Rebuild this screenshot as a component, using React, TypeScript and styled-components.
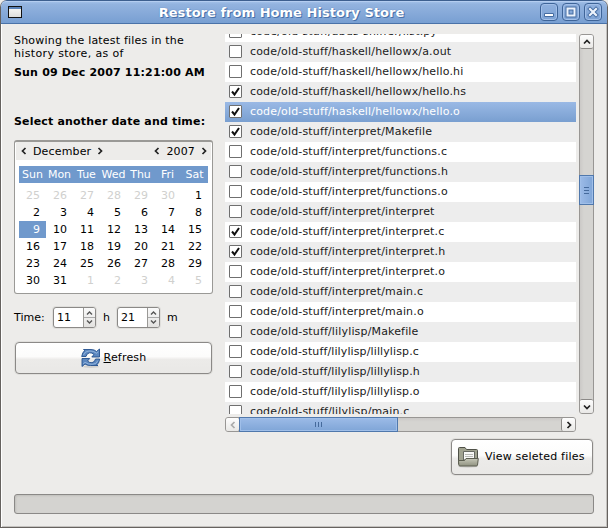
import React from "react";
import styled, { createGlobalStyle, css } from "styled-components";

const Global = createGlobalStyle`
  *, *::before, *::after { box-sizing: border-box; }
  body { margin: 0; background: #edecea; overflow: hidden; }
`;

const Window = styled.div`
  width: 608px;
  height: 528px;
  display: flex;
  flex-direction: column;
  font: 11px/13px "DejaVu Sans", sans-serif;
  color: #000;
  background: #edecea;
  border: 1px solid #66625f;
  border-top: 0;
  box-shadow: inset 1px 0 #fff, inset -1px -1px #c4c2bf;
  border-radius: 7px 7px 0 0;
  overflow: hidden;
`;

const TitleBar = styled.header`
  flex: none;
  height: 24px;
  margin: 0 -1px;
  padding: 0 5px 0 8px;
  display: flex;
  align-items: center;
  border: 1px solid #3d5f8f;
  border-bottom-color: #4a72a8;
  border-radius: 6px 6px 0 0;
  background: linear-gradient(#a4c2ea, #93b3df 15%, #789fd2);
  box-shadow: inset 0 1px #b4cdf0;
`;

const WindowIcon = styled.div`
  width: 14px;
  height: 12px;
  margin-left: -1px;
  border: 1px solid #111;
  background: linear-gradient(#5a82b8 2px, #f4f4f2 2px, #dededc);
`;

const Title = styled.h1`
  flex: 1;
  margin: 0;
  padding: 2px 0 0 1px;
  text-align: center;
  font-size: 13px;
  line-height: 20px;
  letter-spacing: 0.03px;
  color: #fff;
  text-shadow: 1px 1px #4870a8, 0 0 1px #4870a8;
`;

const TitleButtons = styled.div`
  display: flex;
  gap: 4px;
`;

const TitleButton = styled.div`
  width: 18px;
  height: 18px;
  border: 1px solid #3e6498;
  border-radius: 4px;
  box-shadow: inset 0 0 0 1px #a2bfe8;
  background: linear-gradient(#8fb0de, #7da2d4);
  svg { display: block; margin: -1px; }
`;

const Body = styled.main`
  flex: 1;
  padding: 10px 13px 13px 13px;
  display: flex;
  flex-direction: column;
`;

const Columns = styled.div`
  display: flex;
  height: 398px;
`;

const Side = styled.section`
  width: 211px;
  flex: none;
`;

const Intro = styled.p`
  margin: 0;
  height: 32px;
`;

const IntroLine = styled.span<{ $spacing: number }>`
  display: block;
  white-space: nowrap;
  letter-spacing: ${(p) => p.$spacing}px;
`;

const Strong = styled.div<{ $gap: number }>`
  font-weight: bold;
  height: 13px;
  white-space: nowrap;
  margin-bottom: ${(p) => p.$gap}px;
  letter-spacing: 0.18px;
`;

const Calendar = styled.div`
  width: 199px;
  height: 154px;
  border: 1px solid #9a9996;
  border-top: 2px solid #9a9996;
  border-radius: 3px;
  background: #fff;
  overflow: hidden;
`;

const CalendarHead = styled.div`
  height: 18px;
  margin: 0 1px;
  padding: 0 3px 0 4px;
  display: flex;
  align-items: center;
  justify-content: space-between;
  background: #edecea;
`;

const Stepper = styled.div`
  display: flex;
  align-items: center;
  gap: 5px;
  letter-spacing: 0.15px;
`;

const Chevron = styled.svg`
  display: block;
  flex: none;
  fill: none;
`;

const DayNames = styled.div`
  margin: 6px 4px 4px;
  height: 17px;
  display: grid;
  grid-template-columns: repeat(7, 27px);
  background: #7099cc;
  color: #fff;
  text-align: center;
  line-height: 17px;
`;

const Days = styled.div`
  margin: 0 4px;
  display: grid;
  grid-template-columns: repeat(7, 27px);
  grid-auto-rows: 17px;
`;

const Day = styled.span<{ $muted: boolean; $selected: boolean }>`
  padding-right: 6px;
  text-align: right;
  line-height: 17px;
  color: ${(p) => (p.$selected ? "#fff" : p.$muted ? "#d0d0ce" : "#000")};
  background: ${(p) => (p.$selected ? "#7099cc" : "transparent")};
`;

const TimeRow = styled.div`
  margin: 13px 0 14px;
  display: flex;
  align-items: center;
  height: 21px;
`;

const TimeLabel = styled.span<{ $width: number }>`
  width: ${(p) => p.$width}px;
`;

const Spin = styled.div`
  width: 43px;
  height: 21px;
  display: flex;
  border: 1px solid #8b8987;
  border-radius: 3px;
  background: #fff;
  overflow: hidden;
  line-height: 19px;
  padding-left: 3px;
  justify-content: space-between;
  box-shadow: 0 0 0 1px #dfdedb;
`;

const SpinArrows = styled.div`
  width: 12px;
  border-left: 1px solid #9a9996;
  background: linear-gradient(#fafafa, #e3e2e0);
`;

const Button = styled.button<{ $width: number; $height: number; $gap: number; $inset?: number }>`
  width: ${(p) => p.$width}px;
  height: ${(p) => p.$height}px;
  margin: 0 0 0 1px;
  display: flex;
  align-items: center;
  justify-content: ${(p) => (p.$inset ? "flex-start" : "center")};
  gap: ${(p) => p.$gap}px;
  padding: 0 0 1px ${(p) => p.$inset ?? 0}px;
  font: inherit;
  letter-spacing: 0.2px;
  white-space: nowrap;
  color: #000;
  border: 1px solid #8b8987;
  border-radius: 4px;
  background: linear-gradient(#fff, #fcfcfb 45%, #ecebe9 55%, #e9e8e6);
  box-shadow: 0 0 0 1px #e0dfdc;
`;

const ListArea = styled.section`
  display: grid;
  grid-template-columns: 351px 15px;
  grid-template-rows: 380px 15px;
  gap: 3px;
`;

const FileList = styled.div`
  overflow: hidden;
`;

const Rows = styled.div`
  margin-top: -12px;
`;

const FileRow = styled.div<{ $selected: boolean }>`
  height: 20px;
  padding-left: 4px;
  display: flex;
  align-items: center;
  gap: 8px;
  color: #1a1a1a;
  white-space: nowrap;
  background: #fff;
  &:nth-child(even) { background: #ededed; }
  ${(p) =>
    p.$selected &&
    css`
      && { background: linear-gradient(#9ab9e5, #799fd0); color: #fff; }
    `}
`;

const FileName = styled.span<{ $spacing: number }>`
  height: 15px;
  letter-spacing: ${(p) => p.$spacing}px;
`;

const Box = styled.span`
  width: 13px;
  height: 13px;
  margin-bottom: 2px;
  border: 1px solid #6f6f6f;
  border-radius: 1px;
  background: #fff;
  svg { display: block; }
`;

const VerticalBar = styled.div`
  display: flex;
  flex-direction: column;
  border: 1px solid #989694;
  border-radius: 3px;
  background: linear-gradient(90deg, #cbc9c7, #d5d4d1 30%);
`;

const HorizontalBar = styled.div`
  display: flex;
  border: 1px solid #989694;
  border-radius: 3px;
  background: linear-gradient(#cbc9c7, #d5d4d1 30%);
`;

const Cap = styled.div<{ $edge: "top" | "right" | "bottom" | "left" }>`
  width: 14px;
  height: 14px;
  flex: none;
  display: flex;
  align-items: center;
  justify-content: center;
  background: linear-gradient(#fdfdfd, #e9e8e6);
  ${(p) => (p.$edge === "top" || p.$edge === "bottom" ? "width: 13px;" : "height: 13px;")}
  border-${(p) => p.$edge}: 1px solid #8b8987;
  border-radius: 2px;
`;

const Track = styled.div<{ $size: number }>`
  flex: 0 0 ${(p) => p.$size}px;
`;

const Thumb = styled.div<{ $size: number; $vertical?: boolean }>`
  flex: 0 0 ${(p) => p.$size}px;
  display: flex;
  align-items: center;
  justify-content: center;
  border: 1px solid #5078ac;
  margin: ${(p) => (p.$vertical ? "0 -1px" : "-1px 0 -1px -1px")};
  box-shadow: inset 0 0 0 1px #a0bfe9;
  background: linear-gradient(${(p) => (p.$vertical ? "90deg" : "180deg")}, #9cbbe7, #7fa5d7);
`;

const Footer = styled.div`
  display: flex;
  justify-content: flex-end;
  padding: 7px 1px 0 0;
  height: 62px;
`;

const Progress = styled.div`
  height: 20px;
  border: 1px solid #8b8987;
  border-radius: 3px;
  background: #d4d3d0;
  box-shadow: inset 1px 1px 2px #c0bfbc;
`;

const ARROWS = {
  left: "M5.5 1 L2.5 4 L5.5 7",
  right: "M2.5 1 L5.5 4 L2.5 7",
  up: "M1 5.5 L4 2.5 L7 5.5",
  down: "M1 2.5 L4 5.5 L7 2.5",
};

function Arrow({ dir, color = "#222", size = 8 }: { dir: keyof typeof ARROWS; color?: string; size?: number }) {
  return (
    <Chevron width={size} height={size} viewBox="0 0 8 8" stroke={color} strokeWidth="1.7">
      <path d={ARROWS[dir]} />
    </Chevron>
  );
}

function SpinBox({ value }: { value: string }) {
  return (
    <Spin>
      {value}
      <SpinArrows>
        <svg width="11" height="19" fill="none" stroke="#555" strokeWidth="1.4">
          <path d="M3 6.5 5.5 4 8 6.5M3 12.5 5.5 15 8 12.5" />
          <path d="M0 9.5H11" stroke="#aaa" strokeWidth="1" />
        </svg>
      </SpinArrows>
    </Spin>
  );
}

function RefreshIcon() {
  return (
    <svg width="20" height="20" viewBox="0 0 20 20">
      <ellipse cx="10" cy="18.7" rx="8" ry="1.2" fill="#d2d1cf" />
      <path d="M0.700 8.500Q1.500 3.500 4 2.500L2.500 1.500H10Q13.500 1.500 15.500 3.500L18.500 1V9H10.800L13 6.500Q11 4.500 8.500 4.800 5.500 5.500 5 8.500Z" fill="#5c87bf" stroke="#24508d" strokeWidth=".9" />
      <path d="M18.700 11Q18 15.500 15.500 17L17 17.500H9.500Q6 17.500 4 16L1 18.500V10.500H8.700L6.500 13Q8.500 15 11 14.700 14 14 14.500 11Z" fill="#5c87bf" stroke="#24508d" strokeWidth=".9" />
      <path d="M2.500 7Q4 3 8 3 12.500 2.700 15.500 5.200L17.300 3.700M17 12.500Q15.500 16.300 11.500 16.300 7 16.500 4 14.300L2.200 15.800" fill="none" stroke="#9bbbe1" strokeWidth=".8" />
    </svg>
  );
}

function FolderIcon() {
  return (
    <svg width="22" height="22" viewBox="0 0 22 22">
      <defs>
        <linearGradient id="folder" x2="0" y2="1">
          <stop stopColor="#c6c7b8" />
          <stop offset="1" stopColor="#909280" />
        </linearGradient>
      </defs>
      <ellipse cx="11" cy="20.5" rx="10" ry="1.2" fill="#d0cfcc" />
      <path d="M1.500 18V2.500Q1.500 1.500 2.500 1.500H8L9.500 3.500H19.500Q20.500 3.500 20.500 4.500V15H1.500" fill="#a0a28f" stroke="#4e5047" />
      <path d="M6.500 14V5.500H17.500V14Z" fill="#f8f8f6" stroke="#666860" />
      <path d="M8 8.500H16M8 10.500H16" stroke="#b9bab5" />
      <path d="M1.500 14.500H7.500L9 12.500H21.300L20.500 19Q20.300 20 19.300 20H3Q2 20 1.800 19Z" fill="url(#folder)" stroke="#5c5e50" />
    </svg>
  );
}

const WEEK = ["Sun", "Mon", "Tue", "Wed", "Thu", "Fri", "Sat"];
const DAYS = Array.from({ length: 42 }, (_, i) => (i < 6 ? i + 25 : i < 37 ? i - 5 : i - 36));

const FILES: [string, boolean][] = [
  ["abds-sniffer/list.py", false],
  ["haskell/hellowx/a.out", false],
  ["haskell/hellowx/hello.hi", false],
  ["haskell/hellowx/hello.hs", true],
  ["haskell/hellowx/hello.o", true],
  ["interpret/Makefile", true],
  ["interpret/functions.c", false],
  ["interpret/functions.h", false],
  ["interpret/functions.o", false],
  ["interpret/interpret", false],
  ["interpret/interpret.c", true],
  ["interpret/interpret.h", true],
  ["interpret/interpret.o", false],
  ["interpret/main.c", false],
  ["interpret/main.o", false],
  ["lilylisp/Makefile", false],
  ["lilylisp/lillylisp.c", false],
  ["lilylisp/lillylisp.h", false],
  ["lilylisp/lillylisp.o", false],
  ["lilylisp/main.c", false],
];

export default function App() {
  return (
    <>
      <Global />
      <Window>
        <TitleBar>
          <WindowIcon />
          <Title>Restore from Home History Store</Title>
          <TitleButtons>
            <TitleButton>
              <svg width="18" height="18"><path d="M4.500 10.500H13.500V13.500H4.500Z" fill="#fff" stroke="#456ca2" /></svg>
            </TitleButton>
            <TitleButton>
              <svg width="18" height="18" fill="none">
                <path d="M5.500 5.500H12.500V12.500H5.500Z" stroke="#456ca2" strokeWidth="4" />
                <path d="M5.500 5.500H12.500V12.500H5.500Z" stroke="#edf3fc" strokeWidth="2" />
              </svg>
            </TitleButton>
            <TitleButton>
              <svg width="18" height="18" fill="none" strokeLinecap="square">
                <path d="M6 6 12 12M12 6 6 12" stroke="#456ca2" strokeWidth="4" />
                <path d="M6 6 12 12M12 6 6 12" stroke="#edf3fc" strokeWidth="2.2" />
              </svg>
            </TitleButton>
          </TitleButtons>
        </TitleBar>
        <Body>
          <Columns>
            <Side>
              <Intro>
                <IntroLine $spacing={0.2}>Showing the latest files in the</IntroLine>
                <IntroLine $spacing={0.35}>history store, as of</IntroLine>
              </Intro>
              <Strong $gap={36}>Sun 09 Dec 2007 11:21:00 AM</Strong>
              <Strong $gap={12}>Select another date and time:</Strong>
              <Calendar>
                <CalendarHead>
                  <Stepper><Arrow dir="left" /><span>December</span><Arrow dir="right" /></Stepper>
                  <Stepper><Arrow dir="left" /><span>2007</span><Arrow dir="right" /></Stepper>
                </CalendarHead>
                <DayNames>{WEEK.map((d) => <span key={d}>{d}</span>)}</DayNames>
                <Days>
                  {DAYS.map((d, i) => (
                    <Day key={i} $muted={i < 6 || i > 36} $selected={i === 14}>{d}</Day>
                  ))}
                </Days>
              </Calendar>
              <TimeRow>
                <TimeLabel $width={39}>Time:</TimeLabel>
                <SpinBox value="11" />
                <TimeLabel $width={21}>&nbsp; h</TimeLabel>
                <SpinBox value="21" />
                <TimeLabel $width={21}>&nbsp; m</TimeLabel>
              </TimeRow>
              <Button $width={197} $height={32} $gap={3}>
                <RefreshIcon />
                <span><u>R</u>efresh</span>
              </Button>
            </Side>
            <ListArea>
              <FileList>
                <Rows>
                  {FILES.map(([name, checked], i) => (
                    <FileRow key={name} $selected={i === 4}>
                      <Box>
                        {checked && (
                          <svg width="11" height="11" fill="none" stroke="#111" strokeWidth="2">
                            <path d="M2 5.500 4.500 8.500 9 2" />
                          </svg>
                        )}
                      </Box>
                      <FileName $spacing={name.includes("lilly") ? 0.12 : 0.16}>code/old-stuff/{name}</FileName>
                    </FileRow>
                  ))}
                </Rows>
              </FileList>
              <VerticalBar>
                <Cap $edge="bottom"><Arrow dir="up" /></Cap>
                <Track $size={126} />
                <Thumb $size={30} $vertical>
                  <svg width="5" height="7" stroke="#456a9c"><path d="M0 .5H5M0 3.500H5M0 6.500H5" /></svg>
                </Thumb>
                <Track $size={194} />
                <Cap $edge="top"><Arrow dir="down" /></Cap>
              </VerticalBar>
              <HorizontalBar>
                <Cap $edge="right"><Arrow dir="left" color="#aaa" /></Cap>
                <Thumb $size={159}>
                  <svg width="7" height="5" stroke="#456a9c"><path d="M.5 0V5M3.500 0V5M6.500 0V5" /></svg>
                </Thumb>
                <Track $size={163} />
                <Cap $edge="left"><Arrow dir="right" /></Cap>
              </HorizontalBar>
            </ListArea>
          </Columns>
          <Footer>
            <Button $width={142} $height={36} $gap={6} $inset={5}>
              <FolderIcon />
              <span>View seleted files</span>
            </Button>
          </Footer>
          <Progress />
        </Body>
      </Window>
    </>
  );
}
